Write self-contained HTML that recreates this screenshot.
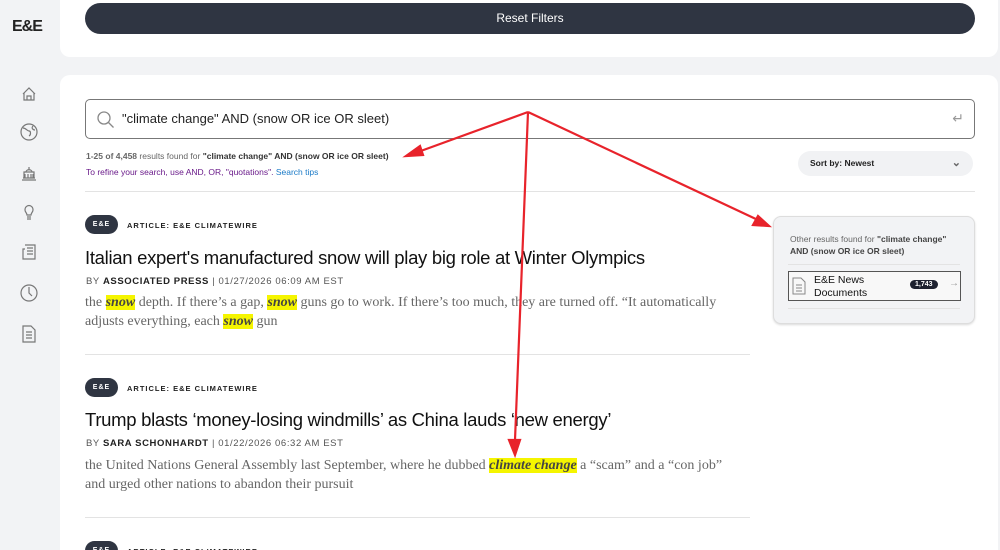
<!DOCTYPE html>
<html><head><style>
*{margin:0;padding:0;box-sizing:border-box}
html,body{width:1000px;height:550px;overflow:hidden}
body{background:#f2f3f5;font-family:"Liberation Sans",sans-serif;position:relative;color:#111}
.abs{position:absolute}
.logo{left:12px;top:18px;font-weight:bold;font-size:16px;letter-spacing:-1px;color:#222}
.card{background:#fff;border-radius:10px}
.btn{left:85px;top:3px;width:890px;height:31px;background:#2f3542;border-radius:16px;color:#fff;font-size:12px;text-align:center;line-height:31px}
.search{left:85px;top:99px;width:890px;height:40px;border:1px solid #777;border-radius:5px}
.meta{font-size:8.5px;color:#666}
.badge{background:#2f3542;color:#fff;font-size:7px;font-weight:bold;border-radius:10px;width:33px;height:19px;text-align:center;line-height:19px;letter-spacing:1px}
.cat{font-size:7.5px;font-weight:bold;letter-spacing:1px;color:#222}
.title{font-size:18.5px;color:#111;letter-spacing:-0.3px}
.by{font-size:9.5px;letter-spacing:0.6px;color:#555}
.by b{color:#222}
.snip{font-family:"Liberation Serif",serif;font-size:14px;color:#666;line-height:19px;width:660px}
.snip i{background:#f5f500;color:#444;font-weight:bold}
.hr{height:1px;background:#e3e3e3}
</style></head><body>
<div class="abs logo">E&amp;E</div>
<div class="abs card" style="left:60px;top:-10px;width:938px;height:67px"></div>
<div class="abs btn">Reset Filters</div>
<div class="abs card" style="left:60px;top:75px;width:938px;height:490px"></div>
<svg class="abs" style="left:0;top:80px" width="60" height="270" fill="none" stroke="#777" stroke-width="1.2">
<path d="M23 14l6-6 6 6M24 13v7h10v-7M27 20v-4h4v4"/>
<circle cx="29" cy="52" r="8"/><path d="M23 48c3 0 4 3 6 3s2 4 0 5M33 46c-2 2 0 4 2 4"/>
<path d="M22 100h14M23 98h12M24 98v-6h10v6M29 87v3M26 92c0-3 6-3 6 0M25 94v4M28 94v4M31 94v4M33 94v4"/>
<path d="M25 130c0-6 8-6 8 0 0 2-2 3-2 5h-4c0-2-2-3-2-5M27 137h4M27 139h4"/>
<path d="M25 165h10v14H23v-10h2M27 168h6M27 171h6M27 174h6"/>
<circle cx="29" cy="213" r="8"/><path d="M29 207v6l3 3"/>
<path d="M23 246h8l4 4v12H23zM26 252h6M26 255h6M26 258h6"/>
</svg>
<div class="abs search"><svg class="abs" style="left:10px;top:10px" width="20" height="20" fill="none" stroke="#888" stroke-width="1.3"><circle cx="8" cy="8" r="6"/><path d="M12.5 12.5l5 5"/></svg>
<div class="abs" style="left:36px;top:11px;font-size:13px;color:#222">"climate change" AND (snow OR ice OR sleet)</div>
<div class="abs" style="right:10px;top:10px;color:#999;font-size:14px">↵</div></div>
<div class="abs meta" style="left:86px;top:151px"><b>1-25 of 4,458</b> results found for <b style="color:#333">"climate change" AND (snow OR ice OR sleet)</b></div>
<div class="abs meta" style="left:86px;top:167px;color:#6a1b8a">To refine your search, use AND, OR, "quotations". <span style="color:#1a7ac7">Search tips</span></div>
<div class="abs" style="left:798px;top:151px;width:175px;height:25px;background:#f1f2f4;border-radius:13px;font-size:8.5px;font-weight:bold;line-height:24px;padding-left:12px;color:#222">Sort by: Newest<span style="position:absolute;right:12px;top:0;color:#666;font-size:11px">⌄</span></div>
<div class="abs hr" style="left:85px;top:191px;width:890px"></div>
<div class="abs" style="left:773px;top:216px;width:202px;height:108px;background:#f2f3f5;border:1px solid #ddd;border-radius:8px;box-shadow:0 1px 2px rgba(0,0,0,.15)">
<div class="abs meta" style="left:16px;top:16px;line-height:12px;width:168px">Other results found for <b style="color:#444">"climate change" AND (snow OR ice OR sleet)</b></div>
<div class="abs hr" style="left:14px;top:47px;width:172px"></div>
<div class="abs" style="left:14px;top:54px;width:173px;height:30px;border:1.5px solid #555;background:#f8f8f8">
<svg class="abs" style="left:3px;top:5px" width="14" height="18" fill="none" stroke="#888"><path d="M1 1h8l4 4v12H1zM4 8h6M4 11h6M4 14h6"/></svg>
<div class="abs" style="left:25px;top:2px;font-size:10.5px;line-height:13px;color:#111">E&amp;E News<br>Documents</div>
<div class="abs" style="left:121px;top:8px;background:#1e2230;color:#fff;font-size:7px;font-weight:bold;border-radius:7px;padding:1px 5px">1,743</div>
<div class="abs" style="left:160px;top:6px;color:#999;font-size:10px">→</div></div>
<div class="abs hr" style="left:14px;top:91px;width:172px"></div>
</div>
<div class="abs badge" style="left:85px;top:215px">E&amp;E</div>
<div class="abs cat" style="left:127px;top:221px">ARTICLE: E&amp;E CLIMATEWIRE</div>
<div class="abs title" style="left:85px;top:247px">Italian expert's manufactured snow will play big role at Winter Olympics</div>
<div class="abs by" style="left:86px;top:276px">BY <b>ASSOCIATED PRESS</b> | 01/27/2026 06:09 AM EST</div>
<div class="abs snip" style="left:85px;top:293px">the <i>snow</i> depth. If there’s a gap, <i>snow</i> guns go to work. If there’s too much, they are turned off. “It automatically adjusts everything, each <i>snow</i> gun</div>
<div class="abs hr" style="left:85px;top:354px;width:665px"></div>
<div class="abs badge" style="left:85px;top:378px">E&amp;E</div>
<div class="abs cat" style="left:127px;top:384px">ARTICLE: E&amp;E CLIMATEWIRE</div>
<div class="abs title" style="left:85px;top:409px">Trump blasts ‘money-losing windmills’ as China lauds ‘new energy’</div>
<div class="abs by" style="left:86px;top:438px">BY <b>SARA SCHONHARDT</b> | 01/22/2026 06:32 AM EST</div>
<div class="abs snip" style="left:85px;top:456px">the United Nations General Assembly last September, where he dubbed <i>climate change</i> a “scam” and a “con job” and urged other nations to abandon their pursuit</div>
<div class="abs hr" style="left:85px;top:517px;width:665px"></div>
<div class="abs badge" style="left:85px;top:541px">E&amp;E</div>
<div class="abs cat" style="left:127px;top:547px">ARTICLE: E&amp;E CLIMATEWIRE</div>
<svg class="abs" style="left:0;top:0" width="1000" height="550" stroke="#e8232b" stroke-width="2.2" fill="#e8232b">
<path d="M528 112L418 152M528 112L758 220M528 112L515 440" fill="none"/>
<path d="M406 156l14-10 3 9z"/><path d="M769 226l-16-1 5-9z"/><path d="M515 455l-6-15h11z"/>
</svg>
</body></html>
